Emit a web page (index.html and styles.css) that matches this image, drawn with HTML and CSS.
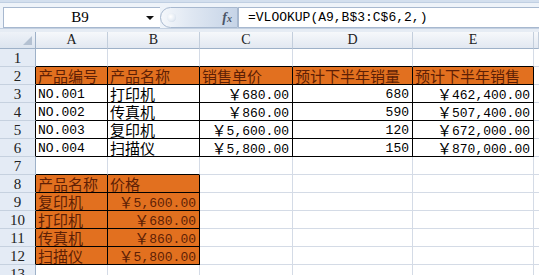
FILE: index.html
```html
<!DOCTYPE html>
<html>
<head>
<meta charset="utf-8">
<link rel="stylesheet" href="styles.css">
</head>
<body>
<div class="app">
  <div class="ribbon-edge"></div>
  <div class="fbar">
    <div class="namebox"><span class="nb-text">B9</span><span class="nb-arrow"></span></div>
    <div class="fxbtn"><span class="knob"></span><span class="fx">f<span class="fxs">x</span></span></div>
    <div class="formula">=VLOOKUP(A9,B$3:C$6,2,)</div>
  </div>
  <div class="gap"></div>
  <div class="sheet">
    <div class="corner"><span class="tri"></span></div>
    <div class="ch">A</div><div class="ch">B</div><div class="ch">C</div><div class="ch">D</div><div class="ch">E</div><div class="ch"></div>

    <div class="rh">1</div>
    <div class="c kb"></div><div class="c kb"></div><div class="c kb"></div><div class="c kb"></div><div class="c kb"></div><div class="c"></div>

    <div class="rh kr">2</div>
    <div class="c k o"><span class="z">产品编号</span></div><div class="c k o"><span class="z">产品名称</span></div><div class="c k o"><span class="z">销售单价</span></div><div class="c k o"><span class="z">预计下半年销量</span></div><div class="c k o"><span class="z">预计下半年销售</span></div><div class="c"></div>

    <div class="rh kr">3</div>
    <div class="c k">NO.001</div><div class="c k"><span class="z">打印机</span></div><div class="c k r"><span class="z">￥</span>680.00</div><div class="c k r">680</div><div class="c k r"><span class="z">￥</span>462,400.00</div><div class="c"></div>

    <div class="rh kr">4</div>
    <div class="c k">NO.002</div><div class="c k"><span class="z">传真机</span></div><div class="c k r"><span class="z">￥</span>860.00</div><div class="c k r">590</div><div class="c k r"><span class="z">￥</span>507,400.00</div><div class="c"></div>

    <div class="rh kr">5</div>
    <div class="c k">NO.003</div><div class="c k"><span class="z">复印机</span></div><div class="c k r"><span class="z">￥</span>5,600.00</div><div class="c k r">120</div><div class="c k r"><span class="z">￥</span>672,000.00</div><div class="c"></div>

    <div class="rh kr">6</div>
    <div class="c k">NO.004</div><div class="c k"><span class="z">扫描仪</span></div><div class="c k r"><span class="z">￥</span>5,800.00</div><div class="c k r">150</div><div class="c k r"><span class="z">￥</span>870,000.00</div><div class="c"></div>

    <div class="rh">7</div>
    <div class="c kb"></div><div class="c kb"></div><div class="c"></div><div class="c"></div><div class="c"></div><div class="c"></div>

    <div class="rh kr">8</div>
    <div class="c k o"><span class="z">产品名称</span></div><div class="c k o"><span class="z">价格</span></div><div class="c"></div><div class="c"></div><div class="c"></div><div class="c"></div>

    <div class="rh kr">9</div>
    <div class="c k o"><span class="z">复印机</span></div><div class="c k o r"><span class="z">￥</span>5,600.00</div><div class="c"></div><div class="c"></div><div class="c"></div><div class="c"></div>

    <div class="rh kr">10</div>
    <div class="c k o"><span class="z">打印机</span></div><div class="c k o r"><span class="z">￥</span>680.00</div><div class="c"></div><div class="c"></div><div class="c"></div><div class="c"></div>

    <div class="rh kr">11</div>
    <div class="c k o"><span class="z">传真机</span></div><div class="c k o r"><span class="z">￥</span>860.00</div><div class="c"></div><div class="c"></div><div class="c"></div><div class="c"></div>

    <div class="rh kr">12</div>
    <div class="c k o"><span class="z">扫描仪</span></div><div class="c k o r"><span class="z">￥</span>5,800.00</div><div class="c"></div><div class="c"></div><div class="c"></div><div class="c"></div>

    <div class="rh">13</div>
    <div class="c"></div><div class="c"></div><div class="c"></div><div class="c"></div><div class="c"></div><div class="c"></div>
  </div>
</div>
</body>
</html>
```
FILE: styles.css
```css
* { box-sizing: border-box; }
html, body { margin: 0; padding: 0; background: #fff; }
body { width: 539px; height: 275px; overflow: hidden; font-family: "Liberation Mono", "Noto Sans CJK SC", monospace; font-size: 13px; color: #000; }
.app { width: 539px; }
.ribbon-edge { height: 3px; background: #d3dfee; border-bottom: 1px solid #c0cfe2; }
.fbar { height: 25px; background: #eef3f9; display: flex; align-items: stretch; padding: 4px 0 0 3px; }
.namebox { width: 157px; height: 21px; background: #fff; border: 1px solid #a7b8cf; border-right: none; display: flex; align-items: center; }
.nb-text { flex: 1; text-align: center; line-height: 19px; padding-left: 10px; font-family: "Liberation Serif", serif; font-size: 15px; }
.nb-arrow { width: 0; height: 0; border-left: 4px solid transparent; border-right: 4px solid transparent; border-top: 4px solid #111; margin-right: 6px; }
.fxbtn { width: 78px; height: 21px; border-radius: 11px 0 0 11px; background: linear-gradient(90deg, #f4f7fb 0%, #dfe7f2 40%, #c6d4e7 100%); border: 1px solid #a7b8cf; display: flex; align-items: center; justify-content: space-between; padding: 0 5px 0 6px; }
.knob { width: 9px; height: 9px; border-radius: 50%; background: radial-gradient(circle at 40% 40%, #ffffff 0%, #e3eaf3 60%, #b9c8dc 100%); }
.fx { font-family: "Liberation Serif", serif; font-style: italic; font-weight: bold; font-size: 14px; color: #4a5568; line-height: 19px; }
.fxs { font-size: 10px; }
.formula { flex: 1; height: 21px; background: #fff; border: 1px solid #a7b8cf; border-right: none; line-height: 19px; padding-left: 9px; white-space: nowrap; overflow: hidden; }
.gap { height: 4px; background: #e6ecf4; border-top: 1px solid #c3d0e1; }
.sheet { display: grid; grid-template-columns: 36px 72px 92px 93px 120px 121px 5px; grid-template-rows: 17px repeat(13, 18px); }
.corner { position: relative; background: linear-gradient(#eef2f8, #dce4ef); border-right: 1px solid #9eb1c8; border-bottom: 1px solid #9eb1c8; }
.tri { position: absolute; right: 3px; bottom: 3px; width: 0; height: 0; border-left: 9px solid transparent; border-bottom: 9px solid #b4c1d2; }
.ch { background: linear-gradient(#f6f8fb, #e2e8f1); border-right: 1px solid #c3cedc; border-bottom: 1px solid #9eb1c8; text-align: center; line-height: 16px; color: #222; font-family: "Liberation Serif", serif; font-size: 14px; }
.rh { background: #e4ebf5; border-right: 1px solid #9eb1c8; border-bottom: 1px solid #c6d1df; text-align: center; line-height: 18px; color: #222; font-family: "Liberation Serif", serif; font-size: 15px; }
.c { border-right: 1px solid #d4dbe6; border-bottom: 1px solid #d4dbe6; padding: 2px 3px 0 2px; line-height: 16px; white-space: nowrap; }
.r { text-align: right; }
.k { border-right-color: #000; border-bottom-color: #000; }
.kb { border-bottom-color: #000; }
.kr { border-right-color: #000; }
.o { background: #e2701f; color: #5e1f05; }
.z { font-family: "Noto Sans CJK SC", sans-serif; font-size: 15px; line-height: 14px; vertical-align: -1px; }
```
